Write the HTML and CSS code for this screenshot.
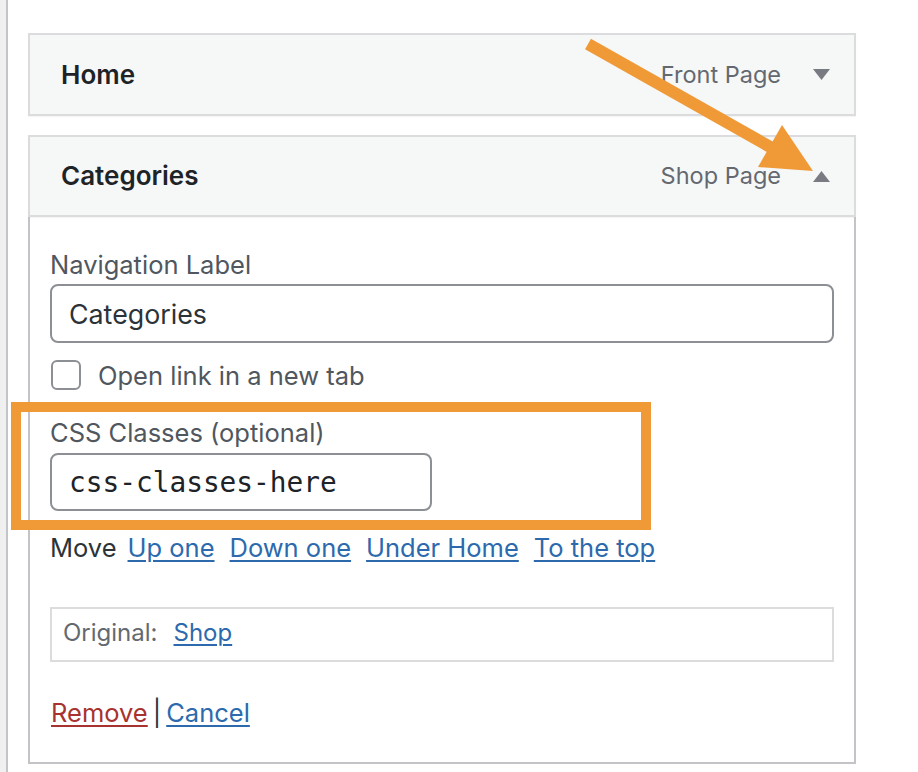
FILE: index.html
```html
<!DOCTYPE html>
<html lang="en">
<head>
<meta charset="utf-8">
<title>Menu item settings</title>
<link rel="stylesheet" href="styles.css">
</head>
<body>
<div class="page">
  <div class="gutter"></div>
  <div class="menu">
    <div class="item">
      <div class="bar">
        <span class="title">Home</span>
        <span class="type">Front Page</span>
        <svg class="toggle" width="17" height="11" viewBox="0 0 17 11"><path d="M0 0H17L8.5 11Z"/></svg>
      </div>
    </div>
    <div class="item open">
      <div class="bar">
        <span class="title">Categories</span>
        <span class="type">Shop Page</span>
        <svg class="toggle" width="17" height="11" viewBox="0 0 17 11"><path d="M0 11H17L8.5 0Z"/></svg>
      </div>
      <div class="settings">
        <div class="field-label">Navigation Label</div>
        <div class="text-input wide">Categories</div>
        <div class="check-row">
          <span class="checkbox"></span>
          <span class="check-label">Open link in a new tab</span>
        </div>
        <div class="field-label css-label">CSS Classes (optional)</div>
        <div class="text-input narrow mono">css-classes-here</div>
        <div class="move-row">
          <span class="move-label">Move</span>
          <a class="link" href="#">Up one</a>
          <a class="link" href="#">Down one</a>
          <a class="link" href="#">Under Home</a>
          <a class="link" href="#">To the top</a>
        </div>
        <div class="original">
          <span class="orig-label">Original:</span>
          <a class="link" href="#">Shop</a>
        </div>
        <div class="actions">
          <a class="remove" href="#">Remove</a>
          <span class="sep">|</span>
          <a class="link" href="#">Cancel</a>
        </div>
      </div>
    </div>
  </div>
  <svg class="annotations" width="918" height="772" viewBox="0 0 918 772">
    <rect x="16" y="407" width="630" height="118" fill="none" stroke="#f09a37" stroke-width="10"/>
    <line x1="588" y1="44" x2="772" y2="148" stroke="#f09a37" stroke-width="12"/>
    <polygon points="782,125 758,167 813,171" fill="#f09a37"/>
  </svg>
</div>
</body>
</html>
```

FILE: styles.css
```css
* { box-sizing: border-box; }

html, body {
  margin: 0;
  padding: 0;
  background: #ffffff;
}

body {
  font-family: Inter, "Noto Sans", sans-serif;
  color: #1d2327;
}

.page {
  position: relative;
  width: 918px;
  height: 772px;
  display: flex;
  overflow: hidden;
}

.gutter {
  width: 8px;
  flex: none;
  background: #f0f0f1;
  border-right: 2px solid #c3c4c7;
}

.menu {
  margin-left: 20px;
  width: 828px;
  flex: none;
}

.item {
  margin-top: 33px;
}

.item.open {
  margin-top: 19px;
}

.bar {
  height: 83px;
  display: flex;
  align-items: center;
  background: #f6f7f7;
  border: 2px solid #dcdcde;
  padding: 0 24px 0 31px;
  box-shadow: 0 1px 1px rgba(0, 0, 0, 0.04);
}

.item.open .bar {
  height: 82px;
}

.title {
  font-size: 26px;
  font-weight: 600;
  line-height: 40px;
  color: #1d2327;
}

.type {
  margin-left: auto;
  font-size: 23.5px;
  line-height: 40px;
  color: #646970;
}

.toggle {
  margin-left: 32px;
  fill: #787c82;
  flex: none;
}

.settings {
  border: 2px solid #c3c4c7;
  border-top: none;
  padding: 32px 20px 33px 20px;
  height: 547px;
}

.field-label {
  font-size: 25.5px;
  line-height: 32px;
  color: #50575e;
}

.text-input {
  display: flex;
  align-items: center;
  border: 2px solid #8c8f94;
  border-radius: 8px;
  background: #fff;
  padding-left: 17px;
  color: #2c3338;
}

.text-input.wide {
  margin-top: 3px;
  height: 59px;
  width: 784px;
  font-size: 26.8px;
}

.text-input.narrow {
  margin-top: 4px;
  height: 58px;
  width: 382px;
}

.mono {
  font-family: "DejaVu Sans Mono", "Liberation Mono", monospace;
  font-size: 27.8px;
  color: #1d2327;
}

.check-row {
  margin-top: 17px;
  display: flex;
  align-items: flex-start;
  height: 32px;
}

.checkbox {
  width: 30px;
  height: 30px;
  margin-left: 1px;
  border: 2px solid #8c8f94;
  border-radius: 6px;
  background: #fff;
  flex: none;
}

.check-label {
  margin-left: 17px;
  font-size: 25.5px;
  line-height: 32px;
  color: #50575e;
}

.css-label {
  margin-top: 25px;
}

.move-row {
  margin-top: 21px;
  display: flex;
  gap: 15px;
  font-size: 25.5px;
  line-height: 32px;
  height: 32px;
}

.move-label {
  color: #2c3338;
  margin-right: -4px;
}

.link {
  color: #2c6aad;
  text-decoration: underline;
  text-underline-offset: 3px;
  text-decoration-thickness: 2px;
}

.original {
  margin-top: 43px;
  height: 55px;
  width: 784px;
  border: 2px solid #dcdcde;
  padding: 8px 11px 0;
  display: flex;
  gap: 16px;
  font-size: 24px;
  line-height: 32px;
}

.orig-label {
  color: #646970;
}

.actions {
  margin-top: 35px;
  display: flex;
  gap: 5px;
  font-size: 25.5px;
  line-height: 32px;
  padding-left: 1px;
}

.remove {
  color: #a83230;
  text-decoration: underline;
  text-underline-offset: 3px;
  text-decoration-thickness: 2px;
}

.sep {
  color: #2c3338;
}

.annotations {
  position: absolute;
  left: 0;
  top: 0;
  pointer-events: none;
}
```
